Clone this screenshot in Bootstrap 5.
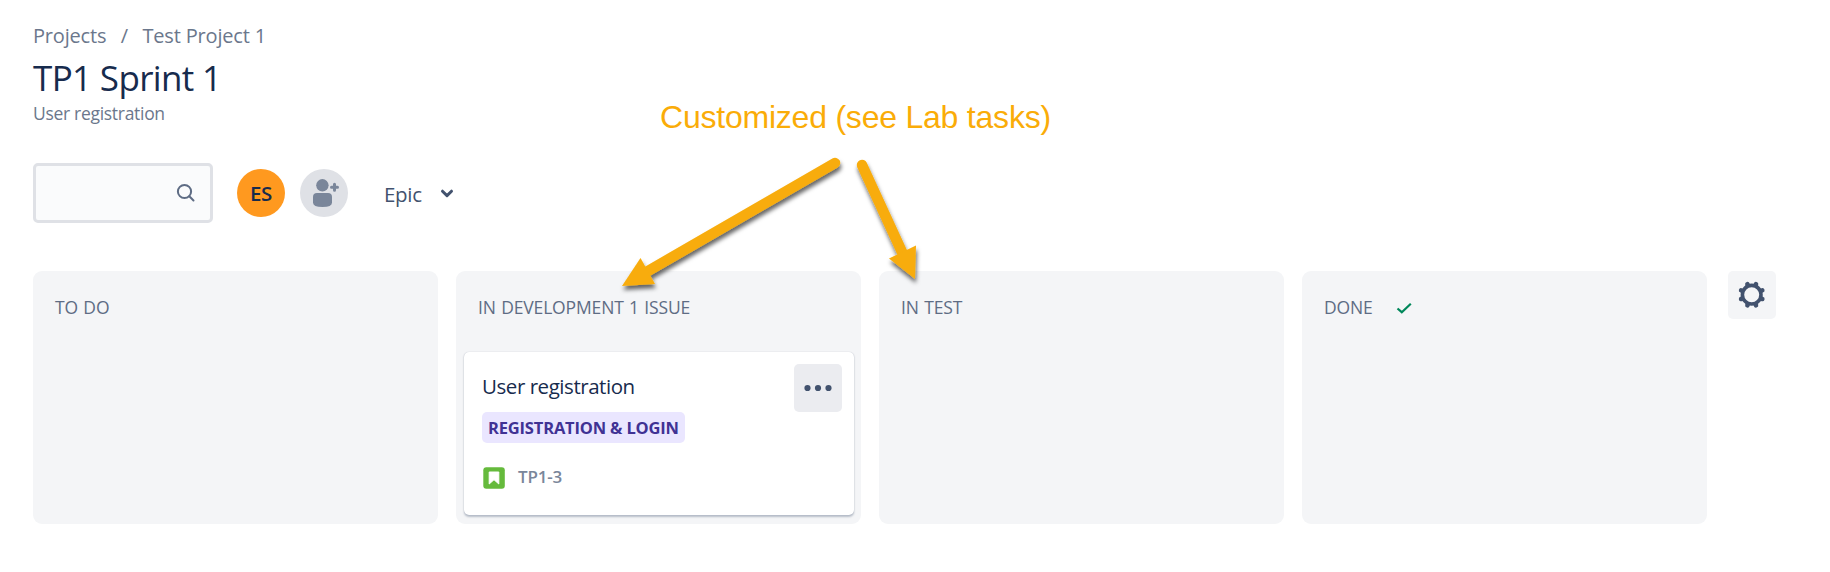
<!DOCTYPE html>
<html lang="en">
<head>
<meta charset="utf-8">
<title>TP1 Sprint 1</title>
<meta name="viewport" content="width=device-width, initial-scale=1">
<link href="https://cdn.jsdelivr.net/npm/bootstrap@5.3.0/dist/css/bootstrap.min.css" rel="stylesheet">
<style>
  body { font-family: "Open Sans", "Noto Sans", sans-serif; color: #172b4d; background: #fff; overflow: hidden; }
  .page { padding: 22px 54px 48px 33px; height: 572px; }
  .crumbs { --bs-breadcrumb-divider-color: #6b778c; --bs-breadcrumb-item-padding-x: 14.5px; font-size: 20px; line-height: 28px; letter-spacing: -.18px; color: #6b778c; }
  .crumbs a { color: inherit; text-decoration: none; }
  .sprint-title { font-size: 35px; line-height: 52px; margin-top: 2px; font-weight: 400; letter-spacing: -.65px; }
  .goal { font-size: 17.5px; line-height: 18px; letter-spacing: -.3px; color: #6b778c; }
  .tools { margin-top: 41px; height: 60px; }
  .search { width: 180px; height: 60px; border: 3px solid #dfe1e6; border-radius: 5px; background: #fafbfc; padding-right: 14px; }
  .search .form-control { background: transparent; }
  .face { width: 48px; height: 48px; }
  .face-es { margin-left: 24px; background: #ff991f; font-weight: 600; font-size: 20.5px; letter-spacing: -.3px; }
  .face-add { margin-left: 15px; background: #dfe1e6; }
  .epic { margin-left: 36px; font-size: 20.5px; line-height: 30px; color: #42526e; letter-spacing: -.3px; padding-top: 2px; }
  .board { margin-top: 48px; gap: 18px; }
  .lane { width: 405px; height: 253px; background: #f4f5f7; border-radius: 9px; padding: 0 7px 0 8px; }
  .lane-head { height: 81px; padding: 22px 14px 0; font-size: 17.5px; line-height: 28px; color: #5e6c84; letter-spacing: -.15px; word-spacing: 1px; }
  .issue { height: 163px; border: 0; border-radius: 5px; padding: 12px 12px 0 18px; box-shadow: 0 1.5px 2px rgba(9,30,66,.25), 0 0 1px rgba(9,30,66,.2); }
  .issue-title { font-size: 20.5px; line-height: 28px; letter-spacing: -.45px; padding-top: 8px; }
  .more { width: 48px; height: 48px; border-radius: 5px; background: #ebecf0; }
  .epic-tag { height: 31px; border-radius: 5px; padding: 0 6px; background: #eae6ff; color: #403294; font-size: 16.5px; line-height: 32px; font-weight: 700; letter-spacing: -.17px; }
  .issue-foot { margin-top: 20px; height: 30px; }
  .key { margin-left: 12px; font-size: 17px; line-height: 28px; font-weight: 600; color: #7a869a; letter-spacing: -.2px; }
  .gear { width: 48px; height: 48px; border-radius: 5px; background: #f4f5f7; margin-left: 3px; }
  .check { margin-left: 23px; }
  .notes { left: 0; top: 0; width: 1830px; height: 572px; pointer-events: none; }
  .notes text { font-family: "Liberation Sans", Arial, sans-serif; font-size: 32px; letter-spacing: -.22px; fill: #faac08; }
</style>
</head>
<body>
<main class="page position-relative">
  <nav aria-label="breadcrumb">
    <ol class="breadcrumb crumbs mb-0">
      <li class="breadcrumb-item"><a href="#">Projects</a></li>
      <li class="breadcrumb-item"><a href="#">Test Project 1</a></li>
    </ol>
  </nav>
  <h1 class="sprint-title mb-0"><span>TP1 Sprint 1</span></h1>
  <div class="goal"><span>User registration</span></div>

  <div class="tools d-flex align-items-center">
    <div class="search d-flex align-items-center">
      <input class="form-control border-0 shadow-none" type="text" aria-label="Search">
      <svg class="flex-shrink-0" width="20" height="20" viewBox="0 0 20 20" fill="none" stroke="#5e6c84" stroke-width="2" stroke-linecap="round"><circle cx="8.5" cy="8.5" r="6.6"/><path d="M13.3 13.3 17.500 17.500"/></svg>
    </div>
    <div class="face face-es rounded-circle d-flex align-items-center justify-content-center"><span>ES</span></div>
    <div class="face face-add rounded-circle">
      <svg width="48" height="48" viewBox="0 0 48 48" fill="#7a869a"><circle cx="22.4" cy="16.3" r="6.2"/><path d="M13 28q0-4 4-4h11q4 0 4 4v5.500q0 4.500-9.500 4.500T13 33.500z"/><path d="M34.500 15.300v6M31.500 18.300h6" stroke="#7a869a" stroke-width="3" stroke-linecap="round"/></svg>
    </div>
    <div class="epic d-flex align-items-center"><span>Epic</span>
      <svg class="ms-3" width="18" height="18" viewBox="0 0 18 18" fill="none" stroke="#42526e" stroke-width="3" stroke-linecap="round" stroke-linejoin="round"><path d="M4.500 6.200 9 10.600l4.500-4.400"/></svg>
    </div>
  </div>

  <div class="board d-flex align-items-start">
    <section class="lane"><div class="lane-head"><span>TO DO</span></div></section>
    <section class="lane">
      <div class="lane-head"><span>IN DEVELOPMENT 1 ISSUE</span></div>
      <article class="card issue">
        <div class="d-flex justify-content-between">
          <div class="issue-title"><span>User registration</span></div>
          <div class="more d-flex align-items-center justify-content-center">
            <svg width="28" height="8" viewBox="0 0 28 8" fill="#42526e"><circle cx="3.500" cy="4" r="3.100"/><circle cx="14" cy="4" r="3.100"/><circle cx="24.500" cy="4" r="3.100"/></svg>
          </div>
        </div>
        <div class="d-flex"><span class="epic-tag">REGISTRATION &amp; LOGIN</span></div>
        <div class="issue-foot d-flex">
          <svg width="24" height="30" viewBox="0 0 24 30"><rect x="1.300" y="4.200" width="21.500" height="21.600" rx="3" fill="#65ba3c"/><path d="M7.200 9h9.600v12l-4.800-4.300L7.200 21z" fill="#fff" stroke="#fff" stroke-linejoin="round"/></svg>
          <span class="key">TP1-3</span>
        </div>
      </article>
    </section>
    <section class="lane"><div class="lane-head"><span>IN TEST</span></div></section>
    <section class="lane">
      <div class="lane-head d-flex"><span>DONE</span>
        <svg class="check" width="16" height="28" viewBox="0 0 16 28" fill="none" stroke="#00875a" stroke-width="2.200"><path d="M1.500 15.500 5.800 19.200 14.800 10.700"/></svg>
      </div>
    </section>
    <div class="gear">
      <svg width="48" height="48" viewBox="0 0 48 48" fill="none" stroke="#42526e"><g transform="translate(23.700 23.700)"><circle r="9.300" stroke-width="3.600"/><g stroke-width="4.600" stroke-linecap="round"><path d="M4.100-9.900 4.300-10.600M9.900-4.100 10.600-4.300M9.900 4.100 10.600 4.300M4.100 9.900 4.300 10.600M-4.100 9.900-4.300 10.600M-9.900 4.100-10.600 4.300M-9.900-4.100-10.600-4.300M-4.100-9.900-4.300-10.600"/></g></g></svg>
    </div>
  </div>

  <!-- Annotation laid over the board -->
  <svg class="notes position-absolute" viewBox="0 0 1830 572">
    <defs><filter id="drop" x="-20%" y="-20%" width="140%" height="150%"><feDropShadow dx="1" dy="4" stdDeviation="2" flood-color="#000" flood-opacity=".6"/></filter></defs>
    <text x="660" y="128">Customized (see Lab tasks)</text>
    <g fill="#f8ac0a" stroke="#f8ac0a" filter="url(#drop)">
      <path d="M835 163 648 271" stroke-width="10.500" stroke-linecap="round"/>
      <path d="M622 286 640.500 258 655 284z" stroke="none"/>
      <path d="M862 165 902 252" stroke-width="10.500" stroke-linecap="round"/>
      <path d="M915 279 889 258.500 916 245.500z" stroke="none"/>
    </g>
  </svg>
</main>
<script src="https://cdn.jsdelivr.net/npm/bootstrap@5.3.0/dist/js/bootstrap.bundle.min.js"></script>
</body>
</html>
